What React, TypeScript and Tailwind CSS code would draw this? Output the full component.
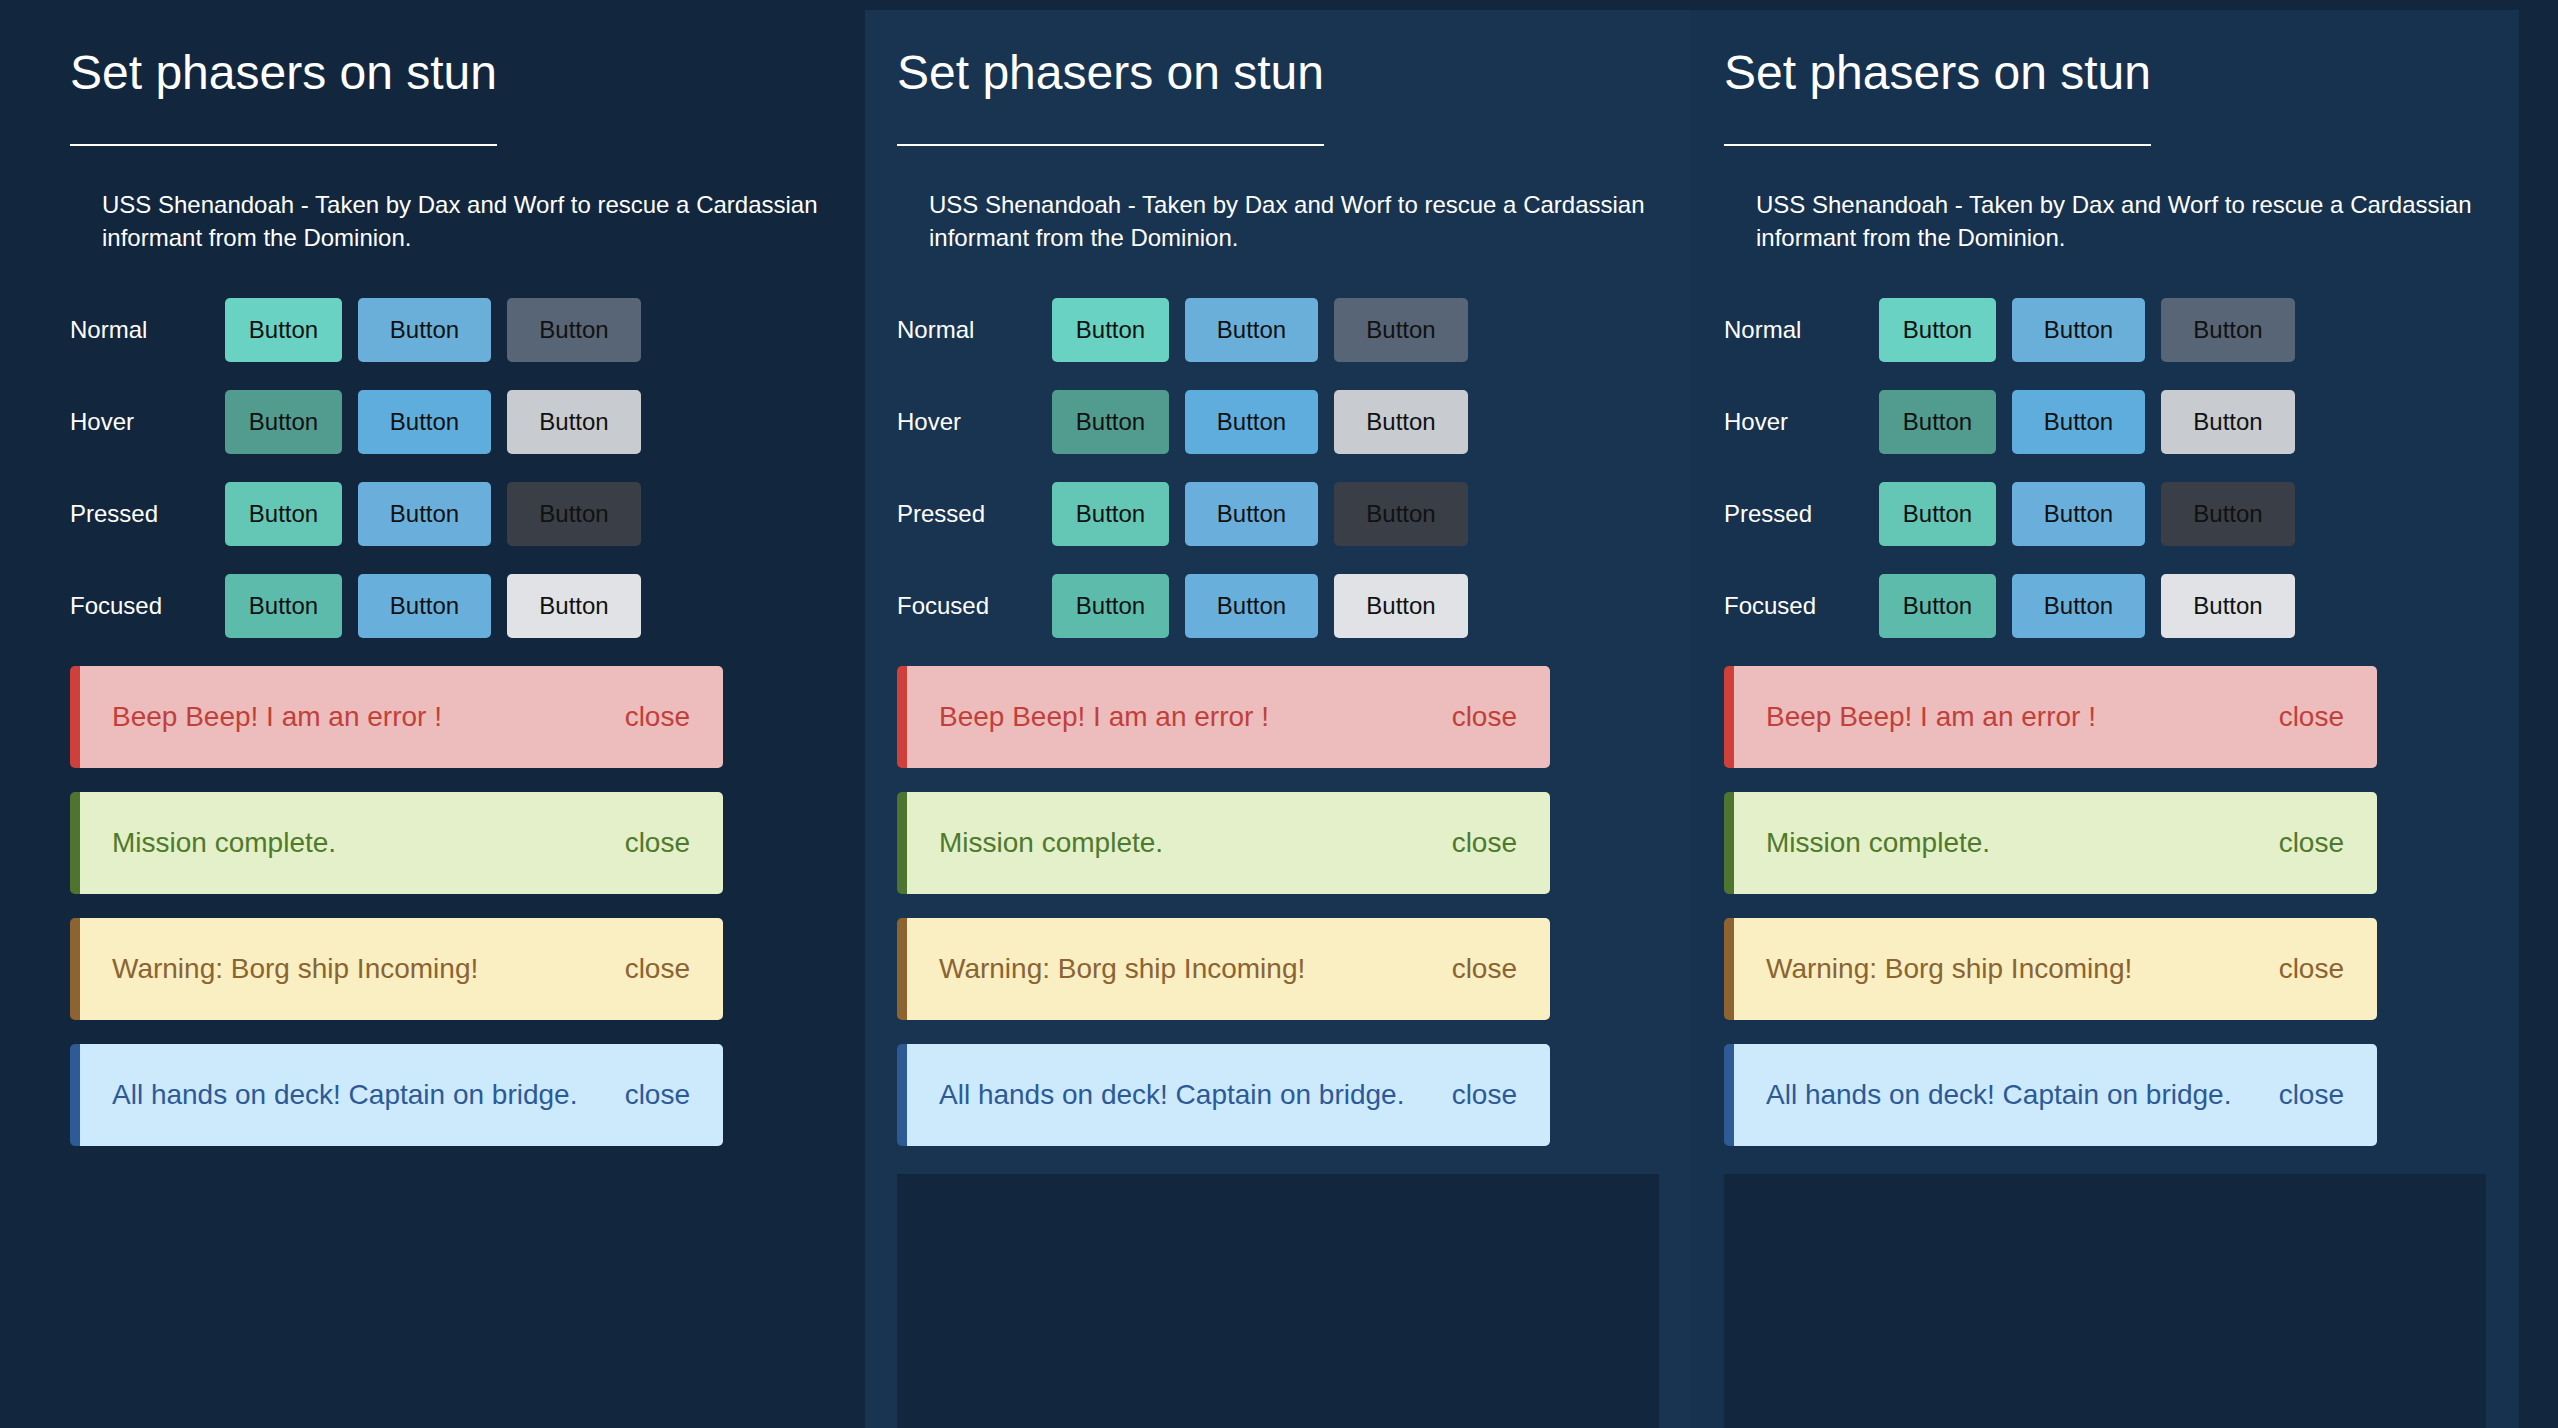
import React from "react";

const rows: { label: string; cls: [string, string, string] }[] = [
  { label: "Normal", cls: ["bg-[#69d2c2]", "bg-[#6aafd9]", "bg-[#586577]"] },
  { label: "Hover", cls: ["bg-[#519c8e]", "bg-[#5eaddd]", "bg-[#c8cbcf]"] },
  { label: "Pressed", cls: ["bg-[#64c6b5]", "bg-[#6aafdb]", "bg-[#3a3e46]"] },
  { label: "Focused", cls: ["bg-[#5dbbac]", "bg-[#69afdc]", "bg-[#e0e2e5]"] },
];

const widths = ["w-[117px]", "w-[133px]", "w-[134px]"];

const alerts = [
  {
    text: "Beep Beep! I am an error !",
    cls: "bg-[#ecbdbc] border-[#d0403a] text-[#c2403a]",
  },
  {
    text: "Mission complete.",
    cls: "bg-[#e4f0c9] border-[#4e7530] text-[#4f7a2c]",
  },
  {
    text: "Warning: Borg ship Incoming!",
    cls: "bg-[#faeec3] border-[#8e6332] text-[#8a6431]",
  },
  {
    text: "All hands on deck! Captain on bridge.",
    cls: "bg-[#cdeafc] border-[#2e5a96] text-[#2d5a97]",
  },
];

function Panel({ cls }: { cls: string }) {
  return (
    <div className={`shrink-0 flex flex-col pt-[35px] ${cls}`}>
      <h1 className="self-start text-[48px] leading-[55px] font-normal text-white pb-[44px] border-b-2 border-white">
        Set phasers on stun
      </h1>
      <p className="mt-[42px] pl-8 text-[24px] leading-[33px] text-white">
        USS Shenandoah - Taken by Dax and Worf to rescue a Cardassian informant from the Dominion.
      </p>
      <div className="mt-[44px] flex flex-col gap-[28px]">
        {rows.map((r) => (
          <div key={r.label} className="flex items-center h-16">
            <span className="w-[155px] text-[24px] text-white">{r.label}</span>
            <div className="flex gap-4">
              {r.cls.map((c, i) => (
                <button
                  key={i}
                  className={`${c} ${widths[i]} h-16 rounded-[5px] text-[24px] text-[#111] flex items-center justify-center`}
                >
                  Button
                </button>
              ))}
            </div>
          </div>
        ))}
      </div>
      <div className="mt-[28px] flex flex-col gap-6">
        {alerts.map((a) => (
          <div
            key={a.text}
            className={`w-[653px] h-[102px] rounded-[5px] border-l-[10px] pl-8 pr-[33px] flex items-center justify-between text-[28px] ${a.cls}`}
          >
            <span>{a.text}</span>
            <span>close</span>
          </div>
        ))}
      </div>
      <div className="mt-[28px] flex-1 w-[762px] bg-[#12273e]" />
    </div>
  );
}

export default function App() {
  return (
    <div className="h-screen overflow-hidden bg-[#12273e] flex pl-[38px] pt-[10px] font-['Liberation_Sans',Arial,sans-serif]">
      <Panel cls="w-[827px] pl-8 bg-[#12273e]" />
      <Panel cls="w-[825px] pl-8 bg-[#193451]" />
      <Panel cls="w-[829px] pl-[34px] bg-[#17324e]" />
    </div>
  );
}
